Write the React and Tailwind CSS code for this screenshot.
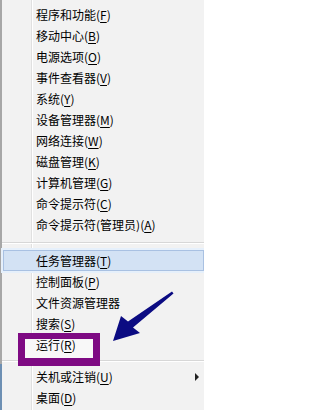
import React from 'react';

const groups = [
  [
    { label: '程序和功能', key: 'F' },
    { label: '移动中心', key: 'B' },
    { label: '电源选项', key: 'O' },
    { label: '事件查看器', key: 'V' },
    { label: '系统', key: 'Y' },
    { label: '设备管理器', key: 'M' },
    { label: '网络连接', key: 'W' },
    { label: '磁盘管理', key: 'K' },
    { label: '计算机管理', key: 'G' },
    { label: '命令提示符', key: 'C' },
    { label: '命令提示符(管理员)', key: 'A' },
  ],
  [
    { label: '任务管理器', key: 'T', active: true },
    { label: '控制面板', key: 'P' },
    { label: '文件资源管理器' },
    { label: '搜索', key: 'S' },
    { label: '运行', key: 'R', marked: true },
  ],
  [
    { label: '关机或注销', key: 'U', submenu: true },
    { label: '桌面', key: 'D' },
  ],
];

const MenuItem = ({ item }) => (
  <div
    className={`relative flex h-[21px] items-center pr-[5px] ${
      item.active
        ? 'ml-px border border-[#a9c1e2] bg-[#d3e2f4] pl-[32px] shadow-[0_0_0_2px_#e6f0fb]'
        : 'pl-[34px]'
    }`}
  >
    {/* annotation box drawn over the item */}
    {item.marked && (
      <div className="pointer-events-none absolute left-[16px] top-[-1px] h-[33px] w-[82px] border-x-[7px] border-t-[6px] border-b-[8px] border-[#7e0a83] bg-[#f8f8f8]" />
    )}
    <span className="relative whitespace-nowrap text-[12px] leading-none text-black">
      {item.label}
      {item.key && (
        <>
          (<span className="underline underline-offset-2">{item.key}</span>)
        </>
      )}
    </span>
    {item.submenu && (
      <span className="ml-auto h-0 w-0 border-y-[4px] border-l-[4px] border-y-transparent border-l-[#222]" />
    )}
  </div>
);

export default function App() {
  return (
    <div
      className="relative flex h-[410px] w-[204px] overflow-hidden bg-[#f2f2f2]"
      style={{ fontFamily: '"Noto Sans CJK SC", "Noto Sans", sans-serif' }}
    >
      {/* window edge */}
      <div className="flex w-[2px] shrink-0 flex-col">
        <div className="flex-1 bg-[#a7a7a7]" />
        <div className="h-[46px] bg-[#6d8fb3]" />
      </div>

      {/* menu with icon gutter line */}
      <div className="flex flex-1 flex-col pt-[4px] bg-[linear-gradient(to_right,transparent_29px,#e0e0e0_29px,#e0e0e0_30px,#ffffff_30px,#ffffff_31px,transparent_31px)]">
        {groups.map((group, gi) => (
          <div key={gi} className="flex flex-col">
            {gi > 0 && (
              <div className={`flex items-center ${gi === 1 ? 'h-[15px]' : 'h-[11px]'}`}>
                <div className="h-[2px] w-full border-t border-[#d7d7d7] bg-white" />
              </div>
            )}
            {group.map((item) => (
              <MenuItem key={item.label} item={item} />
            ))}
          </div>
        ))}
      </div>

      {/* annotation arrow */}
      <svg className="pointer-events-none absolute left-0 top-0" width="204" height="410" viewBox="0 0 204 410">
        <polygon
          points="172,291.5 173.5,293.5 133,327.5 140,333 113,341 121,316 128,321.5"
          fill="#0b0b82"
        />
      </svg>
    </div>
  );
}
